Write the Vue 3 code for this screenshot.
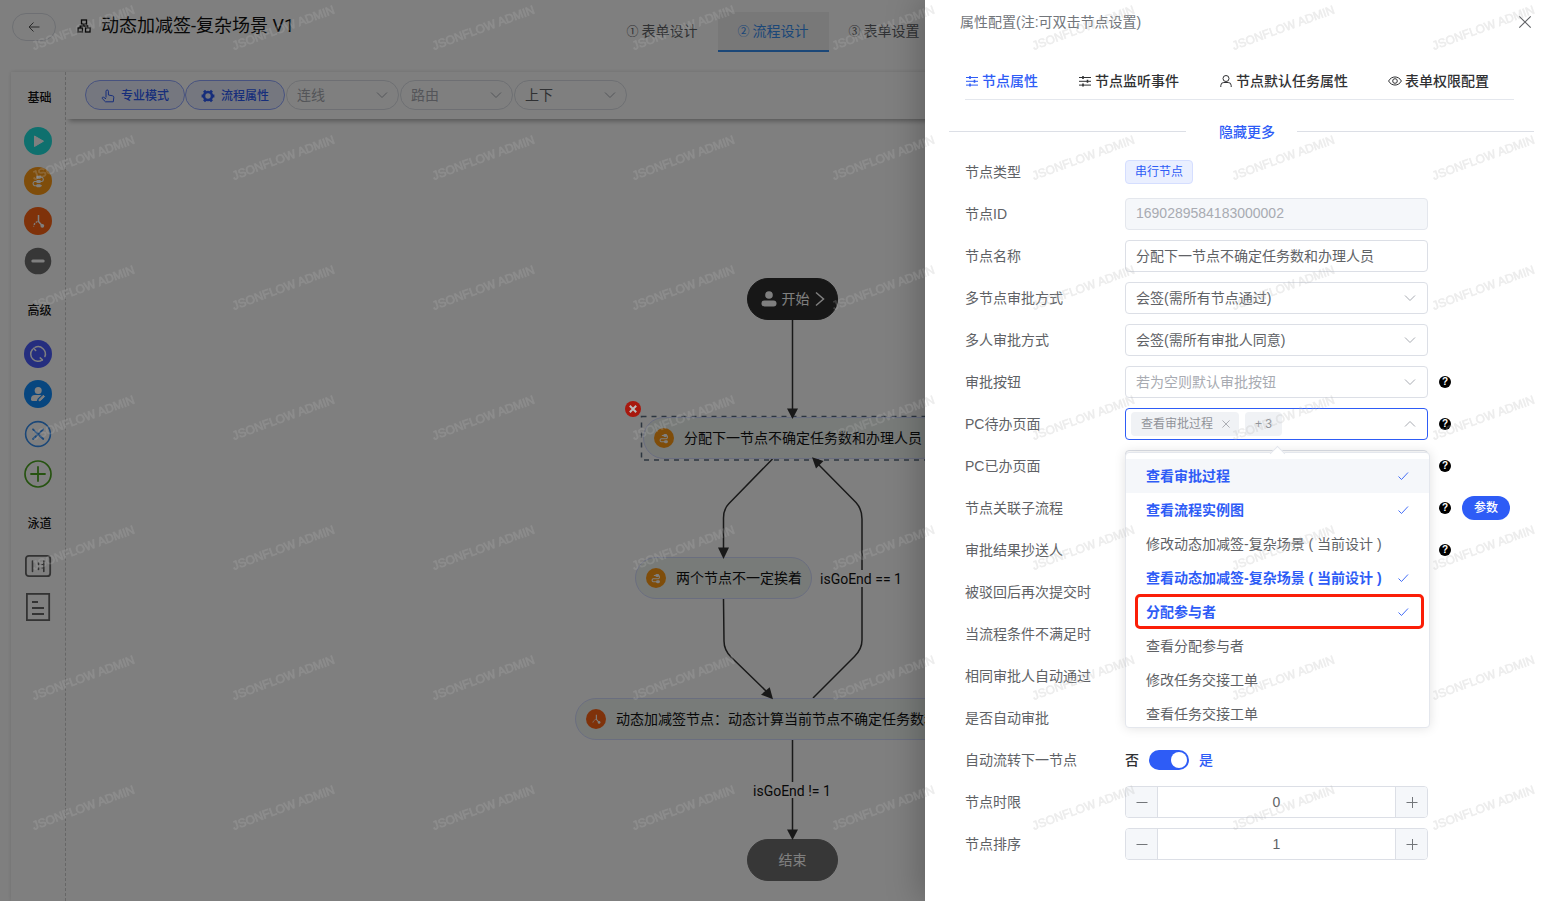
<script setup>
import { ref } from 'vue'

const steps = [
  { mark: '①', name: '表单设计' },
  { mark: '②', name: '流程设计', active: true },
  { mark: '③', name: '表单设置' }
]

const palette = [
  { title: '基础', icons: ['play', 'serial', 'branch', 'minus'] },
  { title: '高级', icons: ['loop', 'user', 'cross', 'plus'] },
  { title: '泳道', icons: ['lane', 'doc'] }
]

const nodes = [
  { kind: 'start', text: '开始', x: 681, y: 159, w: 91 },
  { kind: 'task', icon: 'serial', text: '分配下一节点不确定任务数和办理人员', x: 577, y: 298, w: 299 },
  { kind: 'task', icon: 'serial', text: '两个节点不一定挨着', x: 569, y: 438, w: 177 },
  { kind: 'task', icon: 'branch', text: '动态加减签节点：动态计算当前节点不确定任务数和', x: 509, y: 579, w: 435 },
  { kind: 'end', text: '结束', x: 681, y: 720, w: 91 }
]
const edgeLabels = [
  { text: 'isGoEnd == 1', x: 754, y: 450 },
  { text: 'isGoEnd != 1', x: 687, y: 662 }
]
const place = (n) => ({ left: n.x + 'px', top: n.y + 'px', width: n.w ? n.w + 'px' : undefined })

const tabs = [
  { icon: 'tune', name: '节点属性', active: true },
  { icon: 'tune', name: '节点监听事件' },
  { icon: 'person', name: '节点默认任务属性' },
  { icon: 'eye', name: '表单权限配置' }
]

const rows = [
  { id: 'type', label: '节点类型', type: 'tag', value: '串行节点' },
  { id: 'nid', label: '节点ID', type: 'input', value: '1690289584183000002', disabled: true },
  { id: 'name', label: '节点名称', type: 'input', value: '分配下一节点不确定任务数和办理人员' },
  { id: 'multi', label: '多节点审批方式', type: 'select', value: '会签(需所有节点通过)' },
  { id: 'people', label: '多人审批方式', type: 'select', value: '会签(需所有审批人同意)' },
  { id: 'btn', label: '审批按钮', type: 'select', value: '若为空则默认审批按钮', empty: true, help: true },
  { id: 'todo', label: 'PC待办页面', type: 'multi', help: true },
  { id: 'done', label: 'PC已办页面', type: 'select', value: '', help: true },
  { id: 'sub', label: '节点关联子流程', type: 'select', value: '', help: true, param: true },
  { id: 'copy', label: '审批结果抄送人', type: 'select', value: '', help: true },
  { id: 'reject', label: '被驳回后再次提交时', type: 'select', value: '' },
  { id: 'cond', label: '当流程条件不满足时', type: 'select', value: '' },
  { id: 'same', label: '相同审批人自动通过', type: 'switch' },
  { id: 'auto', label: '是否自动审批', type: 'switch' },
  { id: 'next', label: '自动流转下一节点', type: 'switch', captions: true },
  { id: 'limit', label: '节点时限', type: 'number' },
  { id: 'sort', label: '节点排序', type: 'number' }
]

const options = [
  { text: '查看审批过程', on: true, hover: true },
  { text: '查看流程实例图', on: true },
  { text: '修改动态加减签-复杂场景 ( 当前设计 )' },
  { text: '查看动态加减签-复杂场景 ( 当前设计 )', on: true },
  { text: '分配参与者', on: true, framed: true },
  { text: '查看分配参与者' },
  { text: '修改任务交接工单' },
  { text: '查看任务交接工单' }
]

const numbers = ref({ limit: 0, sort: 1 })
const switches = ref({ same: false, auto: false, next: true })
</script>

<template>
  <div class="app">
    <svg class="defs" aria-hidden="true">
      <symbol id="i-play" viewBox="0 0 28 28"><circle cx="14" cy="14" r="14" fill="#1fe0dc" /><path d="M10.500 9v10.500L19.500 14.200z" fill="#fff" stroke="#fff" stroke-linejoin="round" /></symbol>
      <symbol id="i-serial" viewBox="0 0 28 28"><circle cx="14" cy="14" r="14" fill="#ff9a14" /><path d="M14 10.300h3.800a2.200 2.200 0 0 1 0 4.200H10.600a2.200 2.200 0 0 0 0 4.200H18" fill="none" stroke="#fff" stroke-width="1.100" /><rect x="12.300" y="8.800" width="4.600" height="3" rx="1" fill="#fff" /><rect x="12.300" y="13" width="4.600" height="3" rx="1" fill="#fff" /><rect x="12.300" y="17.200" width="4.600" height="3" rx="1" fill="#fff" /></symbol>
      <symbol id="i-flow" viewBox="0 0 28 28"><circle cx="14" cy="14" r="14" fill="#ff9a14" /><path d="M11 10.500h6.500a2.500 2.500 0 0 1 0 4.500H10a2.300 2.300 0 0 0 0 4.300h6" fill="none" stroke="#fff" stroke-width="1.500" /><rect x="13" y="8.500" width="5.500" height="4" rx="2" fill="#fff" /><rect x="14" y="17.200" width="5.500" height="4" rx="2" fill="#fff" /></symbol>
      <symbol id="i-branch" viewBox="0 0 28 28"><circle cx="14" cy="14" r="14" fill="#ff6414" /><path d="M14.500 8v6.500l4 4.500" fill="none" stroke="#fff" stroke-width="1.500" /><path d="M13.500 14.500c-2 1-3.500 2.500-4 5" fill="none" stroke="#fff" stroke-width="1.300" stroke-dasharray="2 1" /><circle cx="18.300" cy="18.800" r="1.900" fill="#fff" /></symbol>
      <symbol id="i-minus" viewBox="0 0 28 28"><circle cx="14" cy="14" r="13.300" fill="#6e6e6e" /><path d="M8.800 14h10.400" stroke="#fff" stroke-width="3" stroke-linecap="round" /></symbol>
      <symbol id="i-loop" viewBox="0 0 28 28"><circle cx="14" cy="14" r="14" fill="#4a5cff" /><g fill="none" stroke="#fff" stroke-width="1.500" stroke-linecap="round"><path d="M11 7.400a7.300 7.300 0 0 1 9.900 9.200M8.400 9.400a7.300 7.300 0 0 0 10 10.500" /><path d="M9.600 8.400l2.100 2.100M18.400 19.900l-2.200-2" /></g></symbol>
      <symbol id="i-user" viewBox="0 0 28 28"><circle cx="14" cy="14" r="14" fill="#0f8cff" /><circle cx="14.200" cy="10.400" r="3.500" fill="#fff" /><path d="M17.500 15H11a4 4 0 0 0-4 4v.6c0 1 .6 1.400 1.500 1.400h4.300l.8-2.200z" fill="#fff" /><path d="M15 20.800l.3-1.500 4-4 1.300 1.200-4 4z" fill="#fff" stroke="#fff" stroke-linejoin="round" /></symbol>
      <symbol id="i-cross" viewBox="0 0 28 28"><circle cx="14" cy="14" r="12.400" fill="none" stroke="#368ff0" stroke-width="1.600" /><path d="M9 9.300l3.800 3.800M15.500 15.500l3.800 3.500M19.300 9.300L9 19" stroke="#368ff0" stroke-width="1.800" stroke-linecap="round" /></symbol>
      <symbol id="i-plus" viewBox="0 0 28 28"><circle cx="14" cy="14" r="13" fill="none" stroke="#4da621" stroke-width="1.700" /><path d="M14 7v14M7 14h14" stroke="#4da621" stroke-width="1.800" stroke-linecap="round" /></symbol>
      <symbol id="i-lane" viewBox="0 0 28 28"><rect x="1.900" y="2.800" width="24.300" height="20.400" rx="3" fill="none" stroke="#666" stroke-width="1.800" /><path d="M8.500 8v10.500M19.800 8v10.500M14.500 10v1.500M14.500 15v1.500" stroke="#666" stroke-width="1.600" stroke-linecap="round" /><path d="M17.500 11.500h2M17.500 15h2" stroke="#666" /></symbol>
      <symbol id="i-doc" viewBox="0 0 28 28"><rect x="2.900" y=".9" width="22.300" height="26.200" fill="none" stroke="#666" stroke-width="1.800" /><path d="M8 9h6M8 15h12M8 21h12" stroke="#666" stroke-width="1.800" /></symbol>
      <symbol id="i-down" viewBox="0 0 14 14"><path d="M2 4.500l5 5 5-5" fill="none" stroke="currentColor" /></symbol>
      <symbol id="i-up" viewBox="0 0 14 14"><path d="M2 9.500l5-5 5 5" fill="none" stroke="currentColor" /></symbol>
      <symbol id="i-check" viewBox="0 0 14 14"><path d="M2.500 7.500l3 3 6.500-7" fill="none" stroke="currentColor" stroke-width=".9" /></symbol>
      <symbol id="i-x" viewBox="0 0 14 14"><path d="M2 2l10 10M12 2L2 12" fill="none" stroke="currentColor" /></symbol>
      <symbol id="i-tune" viewBox="0 0 14 14"><path d="M1 3.500h12M1 7.300h12M1 11.100h12" stroke="currentColor" /><path d="M5 2v3M9.500 5.800v3M5 9.600v3" stroke="currentColor" stroke-width="1.600" /></symbol>
      <symbol id="i-person" viewBox="0 0 14 14"><circle cx="7" cy="4.500" r="3" fill="none" stroke="currentColor" /><path d="M1.800 13v-1.500a3 3 0 0 1 3-3h4.400a3 3 0 0 1 3 3V13" fill="none" stroke="currentColor" /></symbol>
      <symbol id="i-eye" viewBox="0 0 14 14"><path d="M.6 7C3.500 1.600 10.500 1.600 13.400 7 10.500 12.400 3.500 12.400.6 7z" fill="none" stroke="currentColor" /><circle cx="7" cy="7" r="2.300" fill="none" stroke="currentColor" /></symbol>
    </svg>

    <main class="page">
      <header class="head">
        <div class="head-left">
          <button class="back" aria-label="返回"><svg width="12" height="12" viewBox="0 0 12 12"><path d="M11.500 6H1.500M5.500 1.500L1 6l4.500 4.500" fill="none" stroke="#555" /></svg></button>
          <svg class="org" width="14" height="14" viewBox="0 0 14 14"><g fill="none" stroke="#111" stroke-width="1.300"><rect x="4.500" y="1" width="5" height="4" /><rect x="1" y="9" width="4.500" height="4" /><rect x="8.500" y="9" width="4.500" height="4" /><path d="M7 5v2M3.200 9V7h7.600v2" /></g></svg>
          <h1>动态加减签-复杂场景 V1</h1>
        </div>
        <nav class="steps">
          <a v-for="s in steps" :key="s.name" href="#" :class="{ active: s.active }"><span class="mark">{{ s.mark }}</span>{{ s.name }}</a>
        </nav>
      </header>

      <section class="designer">
        <aside class="palette">
          <div v-for="g in palette" :key="g.title" class="group">
            <h2>{{ g.title }}</h2>
            <button v-for="i in g.icons" :key="i" :aria-label="i"><svg width="28" height="28"><use :href="'#i-' + i" /></svg></button>
          </div>
        </aside>
        <div class="work">
          <div class="toolbar">
            <button class="pill"><svg width="14" height="14" viewBox="0 0 14 14"><path d="M5 8.500V2.200a1.200 1.200 0 0 1 2.400 0V6l4.200.8c.8.200 1.200.6 1.200 1.400L12.300 12.800H4.500L1.200 9.500c-.3-.8.300-1.600 1.200-1.300L5 9.800" fill="none" stroke="currentColor" stroke-linejoin="round" /></svg>专业模式</button>
            <button class="pill"><svg width="14" height="14" viewBox="0 0 14 14"><circle cx="7" cy="7" r="4" fill="none" stroke="currentColor" stroke-width="2.600" /><path d="M3 1.800l1.500 1.500M9.500 3.300L11 1.800M.6 7h2M11.400 7h2M3 12.200l1.500-1.500M9.500 10.700l1.500 1.500" stroke="currentColor" stroke-width="2.800" /></svg>流程属性</button>
            <label class="round"><select aria-label="连线" class="empty"><option>连线</option></select><svg width="14" height="14"><use href="#i-down" /></svg></label>
            <label class="round"><select aria-label="路由" class="empty"><option>路由</option></select><svg width="14" height="14"><use href="#i-down" /></svg></label>
            <label class="round"><select aria-label="方向"><option>上下</option></select><svg width="14" height="14"><use href="#i-down" /></svg></label>
          </div>
          <div class="canvas">
            <svg class="edges" viewBox="66 119 1483 782" width="1483" height="782">
              <rect x="641.500" y="416.500" width="302" height="43.500" fill="none" stroke="#5a6c80" stroke-width="1.500" stroke-dasharray="5 5" />
              <g fill="none" stroke="#333" stroke-width="1.500">
                <path d="M792.500 320V410" />
                <path d="M772.500 459L729 503.500Q723.500 509 723.500 518V550" />
                <path d="M723.500 599L724 641Q724 650 731 657L766 691" />
                <path d="M813 698L854.500 656.500Q862 649 862 640V587M862 570V519Q862 509 856 502.500L818 464" />
                <path d="M792.500 740V782M792.500 798V831" />
              </g>
            </svg>
            <div v-for="n in nodes" :key="n.text" class="node" :class="n.kind" :style="place(n)">
              <svg v-if="n.kind === 'start'" width="16" height="16" viewBox="0 0 16 16" fill="#fff"><circle cx="8" cy="4" r="3.800" /><rect x=".5" y="9.400" width="15" height="6" rx="3" /></svg>
              <svg v-if="n.icon" width="20" height="20"><use :href="n.icon === 'serial' ? '#i-flow' : '#i-' + n.icon" /></svg>
              <span>{{ n.text }}</span>
              <svg v-if="n.kind === 'start'" width="10" height="16" viewBox="0 0 10 16"><path d="M1 1.500L8.500 8 1 14.500" fill="none" stroke="#fff" stroke-width="1.500" /></svg>
            </div>
            <svg class="edges" viewBox="66 119 1483 782" width="1483" height="782" fill="#333">
              <path d="M787 408.500h11L792.500 419z" />
              <path d="M718 547.500h11L723.500 559z" />
              <path d="M773 699.300L761 694.700 769.700 687.300z" />
              <path d="M812 457.300L823.500 461 816 468.500z" />
              <path d="M787 829.500h11L792.500 840z" />
            </svg>
            <span v-for="l in edgeLabels" :key="l.text" class="edge-label" :style="place(l)">{{ l.text }}</span>
          </div>
        </div>
      </section>
    </main>

    <div class="mask">
      <button class="remove" aria-label="删除节点"><svg width="16" height="16" viewBox="0 0 16 16"><circle cx="8" cy="8" r="8" fill="#a8180e" /><path d="M4.800 4.800l6.400 6.400M11.200 4.800l-6.400 6.400" stroke="#bbb" stroke-width="2" /></svg></button>
    </div>

    <aside class="drawer">
      <header class="drawer-head">
        <span>属性配置(注:可双击节点设置)</span>
        <button aria-label="关闭"><svg width="16" height="16"><use href="#i-x" /></svg></button>
      </header>
      <nav class="tabs">
        <a v-for="t in tabs" :key="t.name" href="#" :class="{ active: t.active }"><svg width="14" height="14"><use :href="'#i-' + t.icon" /></svg>{{ t.name }}</a>
      </nav>
      <div class="more"><button>隐藏更多</button></div>
      <form class="form" @submit.prevent>
        <div v-for="r in rows" :key="r.id" class="row">
          <label :for="r.id">{{ r.label }}</label>
          <div class="control">
            <output v-if="r.type === 'tag'" :id="r.id" class="tag">{{ r.value }}</output>
            <input v-else-if="r.type === 'input'" :id="r.id" class="box" type="text" :value="r.value" :disabled="r.disabled" />
            <div v-else-if="r.type === 'select'" class="select">
              <select :id="r.id" class="box" :class="{ empty: r.empty }"><option>{{ r.value }}</option></select>
              <svg width="14" height="14"><use href="#i-down" /></svg>
            </div>
            <div v-else-if="r.type === 'multi'" class="select multi">
              <div class="box focus">
                <span class="chip">查看审批过程<button type="button" aria-label="移除"><svg width="10" height="10"><use href="#i-x" /></svg></button></span>
                <span class="chip">+ 3</span>
                <input :id="r.id" type="text" role="combobox" aria-expanded="true" aria-controls="pages" />
              </div>
              <svg width="14" height="14"><use href="#i-up" /></svg>
              <div class="popper">
                <ul id="pages" role="listbox">
                  <li v-for="o in options" :key="o.text" role="option" :aria-selected="!!o.on" :class="{ on: o.on, hover: o.hover, framed: o.framed }">
                    {{ o.text }}<svg v-if="o.on" width="14" height="14"><use href="#i-check" /></svg>
                  </li>
                </ul>
              </div>
            </div>
            <div v-else-if="r.type === 'switch'" class="switch">
              <span v-if="r.captions" :class="{ active: !switches[r.id] }">否</span>
              <input :id="r.id" v-model="switches[r.id]" type="checkbox" role="switch" />
              <span v-if="r.captions" :class="{ active: switches[r.id] }">是</span>
            </div>
            <div v-else class="number">
              <button type="button" aria-label="减少" @click="numbers[r.id]--"><svg width="14" height="14" viewBox="0 0 14 14"><path d="M1.500 7.500h11" stroke="currentColor" /></svg></button>
              <input :id="r.id" v-model="numbers[r.id]" type="text" />
              <button type="button" aria-label="增加" @click="numbers[r.id]++"><svg width="14" height="14" viewBox="0 0 14 14"><path d="M1.500 7.500h11M7.500 2v11" stroke="currentColor" /></svg></button>
            </div>
          </div>
          <span v-if="r.help" class="help">?</span>
          <button v-if="r.param" type="button" class="param">参数</button>
        </div>
      </form>
    </aside>

    <svg class="watermark" aria-hidden="true">
      <defs>
        <pattern id="wm" width="200" height="130" patternUnits="userSpaceOnUse">
          <text transform="translate(34 50) rotate(-20)" font-size="12" font-family="Liberation Sans, Arial, sans-serif" fill="#b4b4b4" stroke="#b4b4b4" stroke-width=".6" opacity=".25">JSONFLOW ADMIN</text>
        </pattern>
      </defs>
      <rect width="100%" height="100%" fill="url(#wm)" />
    </svg>
  </div>
</template>

<style>
body { overflow: hidden; }
</style>

<style scoped>
* { box-sizing: border-box; }
.app { --primary: #2e5cf6; position: relative; min-height: 100vh; overflow: hidden; font: 14px/20px "Liberation Sans", "Noto Sans CJK SC", sans-serif; color: #606266; background: #fff; }
button { font: inherit; color: inherit; background: none; border: 0; padding: 0; cursor: pointer; }
input, select { font: inherit; color: inherit; }
a { color: inherit; text-decoration: none; }
svg { display: block; flex: none; }
.defs { position: absolute; width: 0; height: 0; }

.page { isolation: isolate; display: flex; flex-direction: column; height: 100vh; }
.head { display: grid; grid-template-columns: 1fr auto 1fr; height: 72px; padding: 12px 15px 0 12px; }
.head-left { display: flex; align-items: flex-start; }
.back { display: flex; align-items: center; justify-content: center; width: 44px; height: 28px; margin-top: 1px; border: 1px solid #dcdfe6; border-radius: 14px; }
.org { margin: 7px 10px 0 21px; }
h1 { margin: 0; font-size: 18px; line-height: 28px; font-weight: 400; color: #111; font-family: Roboto, "Noto Sans CJK SC", sans-serif; }
.steps { display: flex; height: 40px; }
.steps a { display: flex; align-items: center; padding: 0 20px; color: #606266; border-bottom: 2px solid transparent; }
.steps .mark { width: 15px; font-size: 12px; font-family: "Noto Sans CJK SC", sans-serif; }
.steps a.active { color: #368ff0; background: #f0f0f0; border-color: #368ff0; }

.designer { display: flex; flex: 1; min-height: 0; margin-left: 11px; box-shadow: 0 0 4px #ddd; }
.palette { display: flex; flex-direction: column; width: 55px; border-right: 1px dashed #ccc; }
.group { display: flex; flex-direction: column; align-items: center; gap: 12px; padding-top: 16px; padding-bottom: 10px; }
.group h2 { margin: 0 0 7px 3px; font-size: 12px; line-height: 20px; font-weight: 500; color: #111; }
.group button { height: 28px; }
.work { display: flex; flex-direction: column; flex: 1; min-width: 0; }
.toolbar { position: relative; z-index: 1; display: flex; gap: 1px; height: 47px; padding: 8px 19px; box-shadow: 0 5px 5px -3px #aaa; }
.pill { display: flex; align-items: center; justify-content: center; gap: 6px; width: 100px; height: 30px; margin-right: -1px; padding-top: 1px; border: 1px solid #8fa5ff; border-radius: 15px; background: #eaefff; color: var(--primary); font-size: 12px; font-weight: 500; }
.round { position: relative; display: block; width: 113px; }
.pill + .round { margin-left: 1px; }
.round select { width: 100%; height: 30px; padding: 0 10px; border: 1px solid #dcdfe6; border-radius: 15px; background: none; appearance: none; color: #606266; }
.round svg { position: absolute; right: 10px; top: 8px; color: #a8abb2; }
.round select.empty, .box.empty { color: #a8abb2; }

.canvas { position: relative; flex: 1; overflow: hidden; color: #111; }
.edges { position: absolute; left: 0; top: 0; }
.node { position: absolute; display: flex; align-items: center; gap: 10px; height: 42px; padding: 0 10px; white-space: nowrap; border: 1px solid #d5dcff; border-radius: 21px; background: #f0f6f3; }
.node.start { justify-content: center; gap: 5px; padding: 0; color: #fff; background: #2e2e2e; border-color: #2e2e2e; }
.node.end { justify-content: center; color: #fff; background: #6e6e6e; border-color: #6e6e6e; }
.edge-label { position: absolute; font-family: Roboto, sans-serif; white-space: nowrap; }

.mask { position: absolute; inset: 0; background: rgba(0, 0, 0, .5); }
.remove { position: absolute; left: 625px; top: 401px; }

.drawer { position: absolute; top: 0; right: 0; bottom: 0; width: 624px; padding: 0 15px 0 24px; background: #fff; box-shadow: -4px 0 32px rgba(0, 0, 0, .25); }
.drawer-head { display: flex; justify-content: space-between; padding: 12px 1px 0 11px; height: 68px; color: #72767b; }
.drawer-head button { height: 20px; color: #606266; }
.tabs { display: flex; gap: 40px; height: 32px; margin: 0 20px 0 16px; padding-top: 3px; border-bottom: 1px solid #e4e7ed; color: #303133; font-weight: 500; }
.tabs a { display: flex; gap: 3px; height: 20px; align-items: center; }
.tabs a.active { color: var(--primary); }
.more { display: flex; align-items: center; height: 20px; margin: 22px 0 14px; }
.more::before, .more::after { content: ""; flex: 1; height: 1px; margin-bottom: 2px; background: #dcdfe6; }
.more button { margin: 0 22px 0 33px; color: var(--primary); font-weight: 500; }

.form { display: flex; flex-direction: column; gap: 10px; padding-left: 16px; }
.row { display: flex; align-items: center; height: 32px; }
.row > label { width: 160px; flex: none; }
.control { width: 303px; }
.box { display: block; width: 100%; height: 32px; padding: 0 10px; border: 1px solid #dcdfe6; border-radius: 4px; background: #fff; appearance: none; outline: 0; }
input.box { padding-bottom: 2px; }
.box:disabled { background: #f5f7fa; border-color: #e4e7ed; color: #a8abb2; }
.tag { display: inline-block; height: 24px; padding: 0 9px; border: 1px solid #d5deff; border-radius: 4px; background: #eaefff; color: var(--primary); font-size: 12px; line-height: 22px; vertical-align: middle; }
.select { position: relative; }
.select > svg { position: absolute; right: 11px; top: 9px; color: #a8abb2; }
.box.focus { display: flex; align-items: center; gap: 6px; padding: 0 5px; border-color: var(--primary); }
.chip { display: flex; align-items: center; gap: 8px; height: 24px; padding: 0 10px; border-radius: 4px; background: #f0f2f5; color: #909399; font-size: 12px; flex: none; }
.chip button { width: 10px; }
.chip:first-child { padding-right: 8px; }
.box.focus input { flex: 1; min-width: 0; border: 0; outline: 0; background: none; }
.popper { position: absolute; z-index: 5; top: 44px; left: 0; width: 305px; border: 1px solid #e4e7ed; border-radius: 4px; background: #fff; box-shadow: 0 0 12px rgba(0, 0, 0, .12); }
.popper::before { content: ""; position: absolute; top: -5px; left: 146px; width: 10px; height: 10px; background: #fff; border: 1px solid #e4e7ed; border-right: 0; border-bottom: 0; transform: rotate(45deg); }
.popper ul { height: 274px; margin: 0; padding: 6px 0; overflow: hidden; list-style: none; }
.popper li { position: relative; display: flex; align-items: center; justify-content: space-between; height: 34px; padding: 0 19px 0 20px; white-space: nowrap; }
.popper li.on { color: var(--primary); font-weight: 700; }
.popper li.hover { background: #f5f7fa; }
.popper li.framed::after { content: ""; position: absolute; inset: -1px 5px 0 9px; border: 3px solid #fb1e07; border-radius: 5px; }
.help { display: flex; align-items: center; justify-content: center; width: 12px; height: 12px; margin-left: 11px; border-radius: 6px; background: #000; color: #fff; font-size: 10px; line-height: 12px; font-weight: 700; }
.param { width: 48px; height: 24px; margin-left: 11px; border-radius: 12px; background: var(--primary); color: #fff; font-size: 12px; font-weight: 500; }
.switch { display: flex; align-items: center; gap: 10px; height: 20px; color: #303133; font-weight: 500; }
.switch span.active { color: var(--primary); }
.switch input { position: relative; width: 40px; height: 20px; margin: 0; appearance: none; border-radius: 10px; background: #dcdfe6; }
.switch input::after { content: ""; position: absolute; top: 2px; left: 2px; width: 16px; height: 16px; border-radius: 8px; background: #fff; }
.switch input:checked { background: var(--primary); }
.switch input:checked::after { left: 22px; }
.number { display: flex; height: 32px; border: 1px solid #dcdfe6; border-radius: 4px; overflow: hidden; }
.number button { display: flex; align-items: center; justify-content: center; width: 32px; background: #f5f7fa; color: #73767a; border-right: 1px solid #dcdfe6; }
.number input + button { border-right: 0; border-left: 1px solid #dcdfe6; }
.number input { flex: 1; min-width: 0; border: 0; outline: 0; padding: 0; text-align: center; background: #fff; }
.watermark { position: absolute; inset: 0; width: 100%; height: 100%; pointer-events: none; z-index: 10; }
</style>
